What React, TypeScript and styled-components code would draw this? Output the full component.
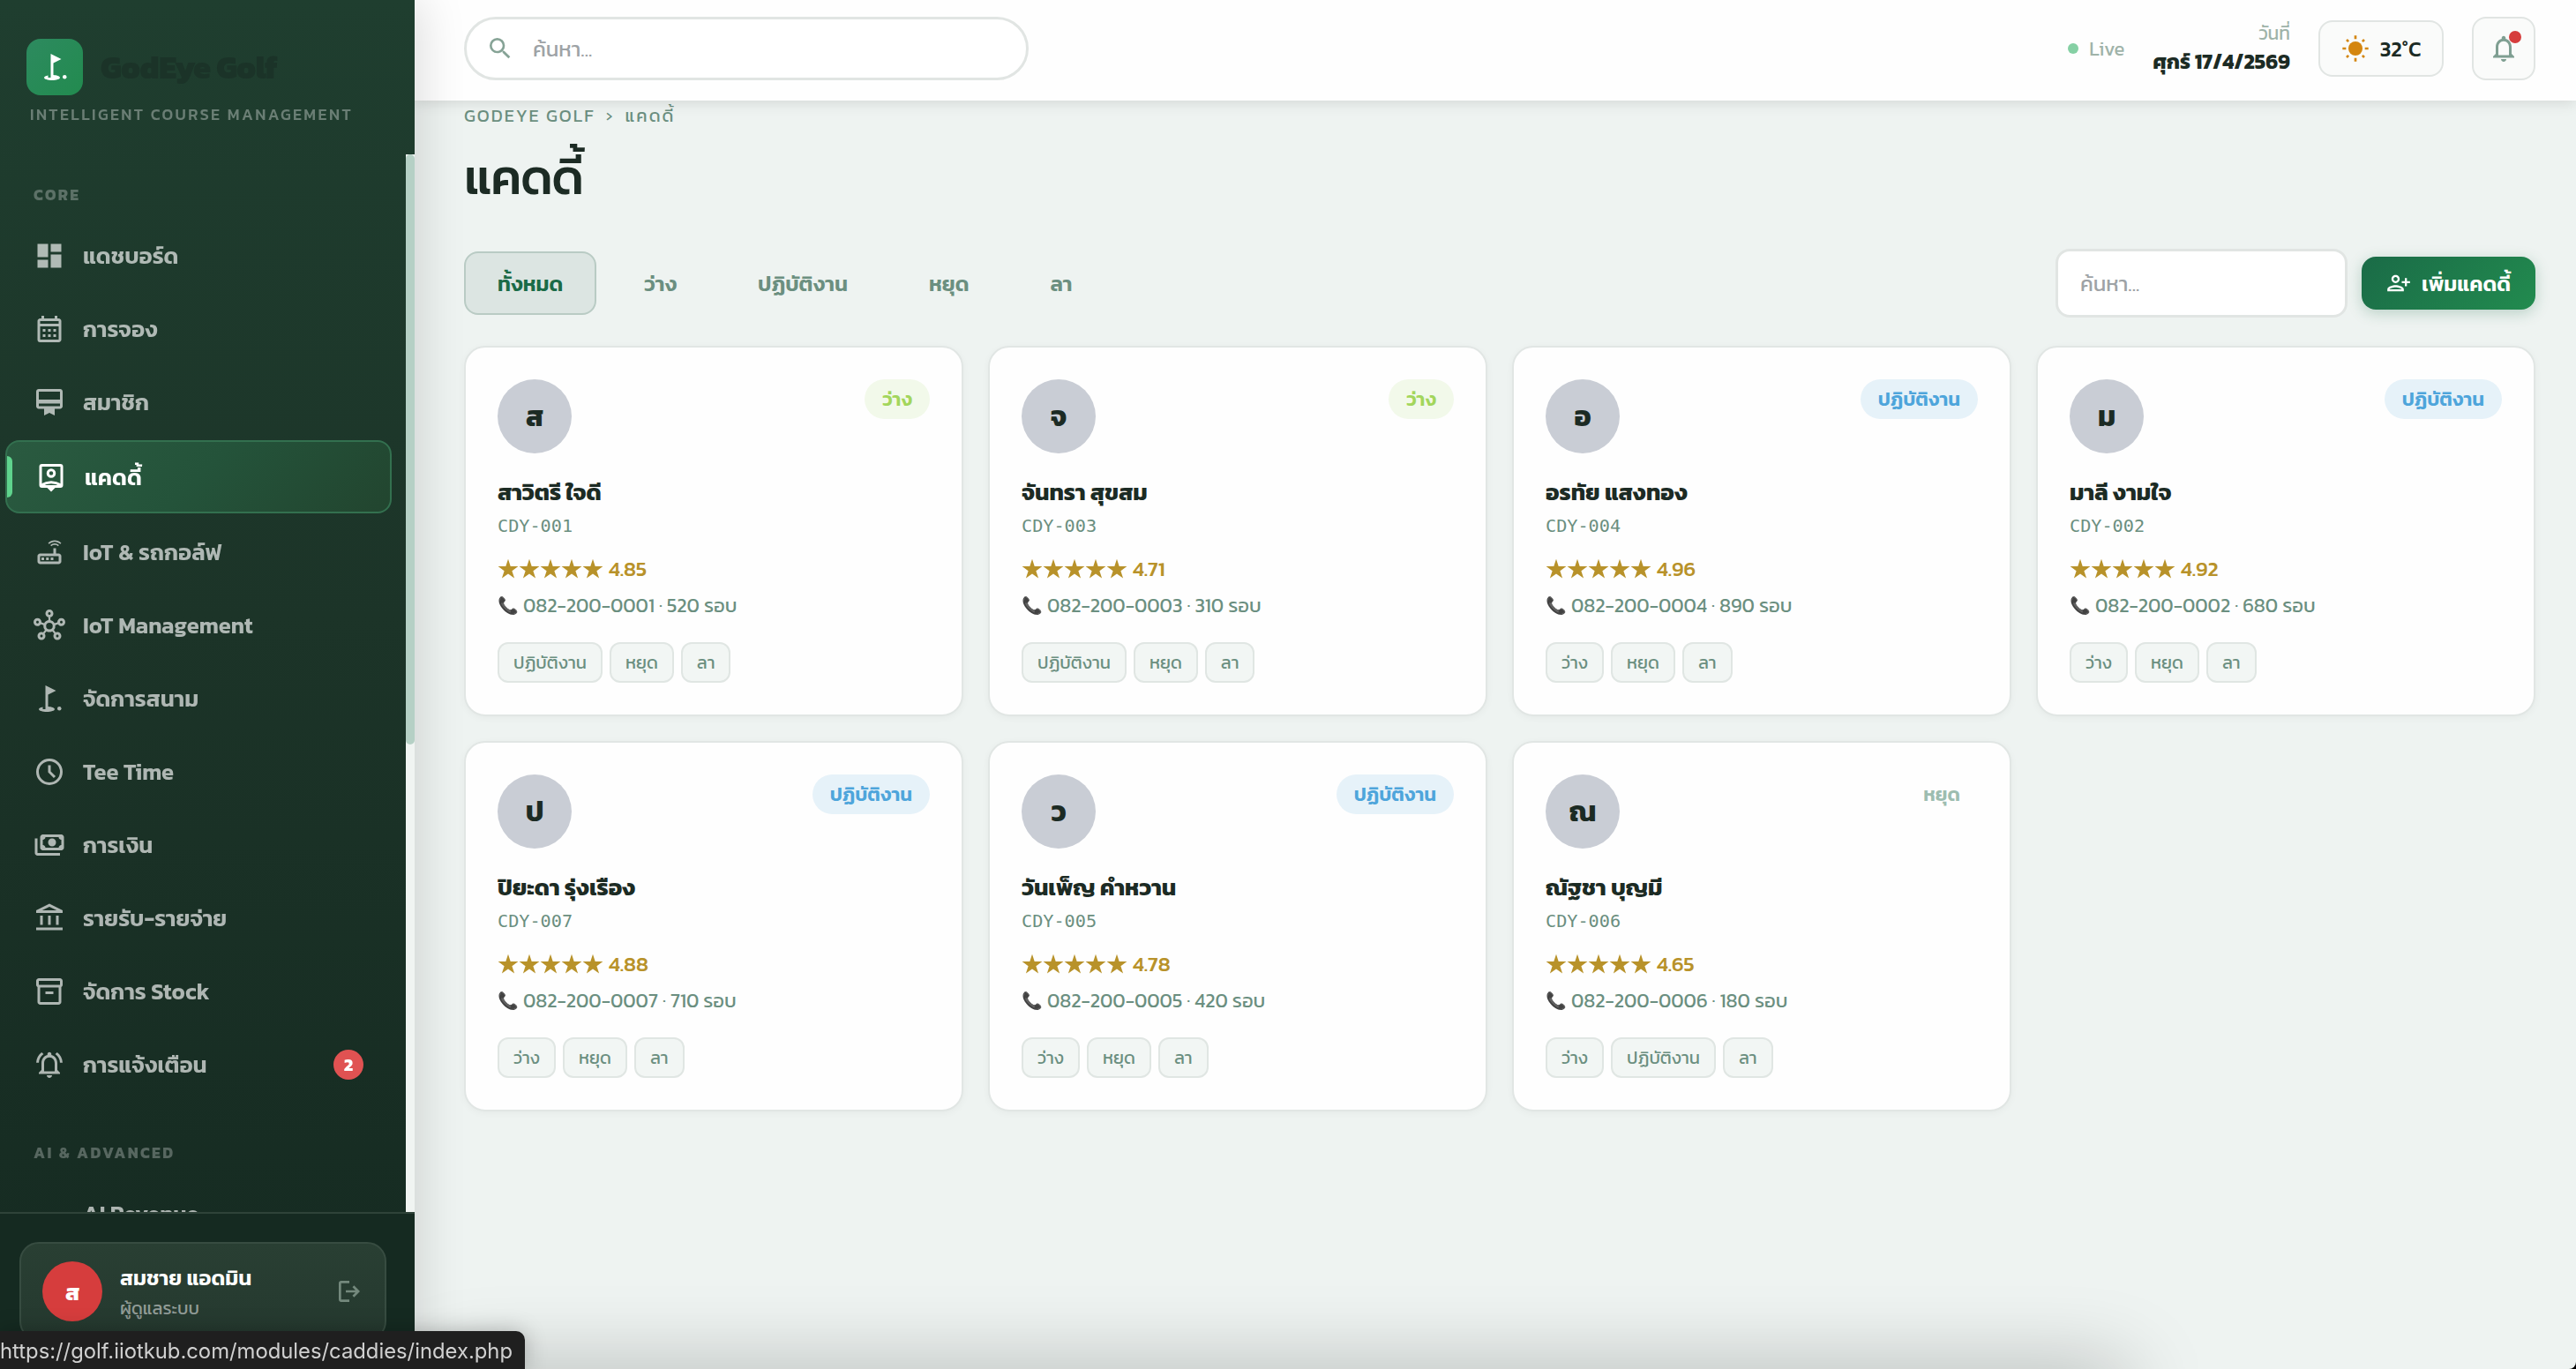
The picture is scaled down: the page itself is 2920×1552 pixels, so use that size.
import React from 'react';
import styled, { createGlobalStyle, css } from 'styled-components';
import {
  MdDashboard,
  MdOutlineCalendarMonth,
  MdCardMembership,
  MdOutlineRouter,
  MdOutlineHub,
  MdGolfCourse,
  MdOutlineInventory2,
  MdOutlineNotificationsActive,
  MdNotificationsNone,
  MdPersonAddAlt,
  MdSearch,
} from 'react-icons/md';

const GlobalStyle = createGlobalStyle`
  * {
    box-sizing: border-box;
  }

  html {
    background: #000;
  }

  body {
    margin: 0;
    overflow: hidden;
    font-family: Kanit, 'Noto Sans Thai', 'Noto Sans', sans-serif;
    color: #1c2b24;
  }

  button, input {
    font-family: inherit;
  }
`;

// Layout

const Layout = styled.div`
  display: flex;
  width: 2920px;
  height: 1552px;
  background: #eef3f1;
  border-bottom-right-radius: 8px;
  overflow: hidden;
`;

const Sidebar = styled.aside`
  position: relative;
  z-index: 3;
  width: 470px;
  flex-shrink: 0;
  display: flex;
  flex-direction: column;
  background: linear-gradient(180deg, #1f3e2f 0%, #1c3428 45%, #152a21 100%);
  box-shadow: 8px 0 48px rgba(0, 0, 0, 0.13);
`;

const Content = styled.div`
  flex: 1;
  min-width: 0;
  display: flex;
  flex-direction: column;
`;

// Sidebar

const Brand = styled.div`
  height: 175px;
  flex-shrink: 0;
  padding: 44px 30px 0;
`;

const BrandRow = styled.div`
  display: flex;
  align-items: center;
  gap: 20px;
`;

const BrandLogo = styled.div`
  width: 64px;
  height: 64px;
  display: grid;
  place-items: center;
  border-radius: 16px;
  color: #fff;
  background: linear-gradient(135deg, #2d8a5f, #228b4f);
`;

const BrandName = styled.div`
  font-size: 36px;
  line-height: 64px;
  font-weight: 800;
  letter-spacing: -0.7px;
  color: #1b3328;
`;

const BrandTagline = styled.div`
  margin: 9px 0 0 4px;
  font-size: 18px;
  line-height: 26px;
  font-weight: 500;
  letter-spacing: 2.4px;
  text-transform: uppercase;
  white-space: nowrap;
  color: rgba(255, 255, 255, 0.34);
`;

const NavArea = styled.div`
  flex: 1;
  min-height: 0;
  display: flex;
  overflow: hidden;
`;

const Nav = styled.nav`
  flex: 1;
  padding: 0 16px 0 6px;
`;

const ScrollTrack = styled.div`
  width: 10px;
  background: #f0f4f2;
`;

const ScrollThumb = styled.div`
  height: 669px;
  border-radius: 5px;
  background: #b5d0c5;
`;

const NavSection = styled.div<{ $first?: boolean }>`
  margin: ${(p) => (p.$first ? '35px' : '50px')} 0 18px 32px;
  font-size: 17.6px;
  line-height: 22px;
  font-weight: 700;
  letter-spacing: 2.4px;
  text-transform: uppercase;
  color: rgba(255, 255, 255, 0.28);
`;

const NavItem = styled.a<{ $active?: boolean }>`
  position: relative;
  display: flex;
  align-items: center;
  gap: 20px;
  height: 79px;
  margin-bottom: 4px;
  padding: 0 32px;
  border-radius: 16px;
  font-size: 25.6px;
  font-weight: 600;
  white-space: nowrap;
  color: rgba(255, 255, 255, 0.65);

  svg {
    flex-shrink: 0;
  }

  ${(p) =>
    p.$active &&
    css`
      height: 83px;
      border: 2px solid #33704f;
      color: #fff;
      background: linear-gradient(135deg, #2a5a40, #24533a 50%, #22452f);

      &::before {
        content: '';
        position: absolute;
        left: 0;
        top: 16px;
        width: 6px;
        height: 47px;
        border-radius: 0 6px 6px 0;
        background: #5fd38d;
      }
    `}
`;

const IconSlot = styled.span`
  width: 36px;
`;

const NavBadge = styled.span`
  width: 34px;
  height: 34px;
  margin-left: auto;
  display: grid;
  place-items: center;
  border-radius: 50%;
  font-size: 20px;
  font-weight: 700;
  color: #fff;
  background: #e05252;
`;

const SidebarFooter = styled.div`
  height: 178px;
  flex-shrink: 0;
  padding: 32px 32px 0 22px;
  border-top: 2px solid #2f4339;
  background: #152a21;
`;

const UserCard = styled.div`
  height: 112px;
  padding: 0 24px 0 24px;
  display: flex;
  align-items: center;
  border: 2px solid #374c41;
  border-radius: 22px;
  background: linear-gradient(180deg, #293f33, #25392f);
`;

const UserAvatar = styled.div`
  width: 68px;
  height: 68px;
  display: grid;
  place-items: center;
  border-radius: 50%;
  font-size: 26px;
  font-weight: 700;
  color: #fff;
  background: #d63d3d;
`;

const UserInfo = styled.div`
  margin-left: 20px;
  padding-top: 4px;
  flex: 1;
  line-height: 34px;
`;

const UserName = styled.div`
  font-size: 24px;
  font-weight: 600;
  color: #fff;
`;

const UserRole = styled.div`
  font-size: 20px;
  color: rgba(255, 255, 255, 0.5);
`;

const LogoutButton = styled.span`
  display: flex;
  color: #74897d;
`;

// Top bar

const Topbar = styled.header`
  position: relative;
  z-index: 2;
  height: 114px;
  flex-shrink: 0;
  padding: 0 46px 4px 56px;
  display: flex;
  align-items: center;
  background: #fefefe;
  box-shadow: 0 2px 16px rgba(0, 0, 0, 0.12);
`;

const SearchBox = styled.div`
  width: 640px;
  height: 72px;
  padding: 0 22px;
  display: flex;
  align-items: center;
  gap: 21px;
  border: 3px solid #e1e5e3;
  border-radius: 36px;
  color: #86a396;
  background: #fff;
`;

const SearchInput = styled.input`
  flex: 1;
  padding: 0;
  border: 0;
  outline: 0;
  font-size: 24px;
  background: transparent;

  &::placeholder {
    color: #9ea3a6;
  }
`;

const LiveStatus = styled.div`
  margin-left: auto;
  display: flex;
  align-items: center;
  gap: 12px;
  font-size: 22px;
  color: #9fb3a9;
`;

const LiveDot = styled.span`
  width: 12px;
  height: 12px;
  border-radius: 50%;
  background: #85d0a4;
`;

const DateBlock = styled.div`
  margin-left: 32px;
  text-align: right;
`;

const DateLabel = styled.div`
  font-size: 21px;
  line-height: 30px;
  color: #9fb3a9;
`;

const DateValue = styled.div`
  font-size: 23.6px;
  line-height: 34px;
  font-weight: 700;
`;

const Weather = styled.div`
  width: 142px;
  height: 64px;
  margin-left: 32px;
  display: flex;
  align-items: center;
  justify-content: center;
  gap: 12px;
  border: 2px solid #e1e5e3;
  border-radius: 16px;
  font-size: 24px;
  font-weight: 500;
  background: #fafbfa;

  svg {
    color: #d4860f;
  }
`;

const BellButton = styled.div`
  position: relative;
  width: 72px;
  height: 72px;
  margin-left: 32px;
  display: grid;
  place-items: center;
  border: 2px solid #e1e5e3;
  border-radius: 16px;
  color: #7f9f92;
  background: #fafbfa;
`;

const BellDot = styled.span`
  position: absolute;
  top: 14px;
  right: 14px;
  width: 14px;
  height: 14px;
  border-radius: 50%;
  background: #d63d3d;
`;

// Page

const Main = styled.main`
  padding: 0 46px 0 56px;
`;

const Breadcrumb = styled.div`
  display: flex;
  gap: 12px;
  height: 36px;
  font-size: 20px;
  line-height: 34px;
  letter-spacing: 2px;
  color: #6b8f80;
`;

const Title = styled.h1`
  margin: 8px 0 0;
  font-size: 56px;
  line-height: 84px;
  font-weight: 500;
  letter-spacing: -1.2px;
`;

const Toolbar = styled.div`
  height: 78px;
  margin-top: 40px;
  display: flex;
  align-items: center;
`;

const Tabs = styled.div`
  display: flex;
  gap: 16px;
`;

const Tab = styled.button<{ $active?: boolean }>`
  height: 72px;
  padding: 0 36px;
  border: 2px solid ${(p) => (p.$active ? '#b9cbc4' : 'transparent')};
  border-radius: 16px;
  font-size: 24px;
  font-weight: 600;
  color: ${(p) => (p.$active ? '#1a6b47' : '#6b8f80')};
  background: ${(p) => (p.$active ? '#dce5e2' : 'transparent')};
`;

const FilterInput = styled.input`
  width: 331px;
  height: 78px;
  margin-left: auto;
  padding: 0 25px;
  border: 3px solid #e1e5e3;
  border-radius: 16px;
  font-size: 24px;
  background: #fff;

  &::placeholder {
    color: #9ea3a6;
  }
`;

const AddButton = styled.button`
  width: 197px;
  height: 60px;
  margin-left: 16px;
  padding: 0;
  display: flex;
  align-items: center;
  justify-content: center;
  gap: 12px;
  border: 0;
  border-radius: 16px;
  font-size: 24px;
  font-weight: 600;
  color: #fff;
  background: linear-gradient(135deg, #1a6b47, #228b4f);
  box-shadow: 0 4px 16px rgba(26, 107, 71, 0.25);
`;

const CardGrid = styled.div`
  margin-top: 32px;
  display: grid;
  grid-template-columns: repeat(4, 1fr);
  gap: 28px;
`;

const Card = styled.article`
  height: 420px;
  padding: 36px;
  border: 2px solid #e1e6e4;
  border-radius: 24px;
  background: #fefefe;
  box-shadow: 0 2px 8px rgba(0, 0, 0, 0.04);
`;

const CardTop = styled.div`
  display: flex;
  justify-content: space-between;
  align-items: flex-start;
`;

const Avatar = styled.div`
  width: 84px;
  height: 84px;
  display: grid;
  place-items: center;
  border-radius: 50%;
  font-size: 32px;
  font-weight: 700;
  background: #c9cdd5;
`;

type Status = 'ว่าง' | 'ปฏิบัติงาน' | 'หยุด' | 'ลา';

const statusColors: Record<Status, { text: string; background: string }> = {
  'ว่าง': { text: '#a3d65c', background: '#f2f9ea' },
  'ปฏิบัติงาน': { text: '#4ea5db', background: '#e6f2f9' },
  'หยุด': { text: '#9dbdb0', background: 'transparent' },
  'ลา': { text: '#9dbdb0', background: 'transparent' },
};

const StatusBadge = styled.span<{ $status: Status }>`
  height: 45px;
  padding: 0 20px;
  border-radius: 23px;
  font-size: 22px;
  line-height: 45px;
  font-weight: 600;
  color: ${(p) => statusColors[p.$status].text};
  background: ${(p) => statusColors[p.$status].background};
`;

const CaddyName = styled.div`
  margin-top: 26px;
  font-size: 26px;
  line-height: 36px;
  font-weight: 700;
`;

const CaddyCode = styled.div`
  margin-top: 6px;
  font-family: 'DejaVu Sans Mono', monospace;
  font-size: 20.2px;
  line-height: 28px;
  color: #6b8f80;
`;

const Rating = styled.div`
  margin-top: 18px;
  display: flex;
  align-items: center;
  gap: 6px;
  font-size: 23.4px;
  line-height: 34px;
  font-weight: 500;
  color: #b8922a;
`;

const Stars = styled.span`
  display: flex;

  svg {
    width: 24px;
    height: 24px;
    fill: currentColor;
  }
`;

const Contact = styled.div`
  margin-top: 8px;
  display: flex;
  align-items: center;
  gap: 5px;
  font-size: 22px;
  line-height: 34px;
  color: #6b8f80;
`;

const PhoneEmoji = styled.span`
  font-size: 19px;
`;

const Actions = styled.div`
  margin-top: 24px;
  display: flex;
  gap: 8px;
`;

const ActionButton = styled.button`
  height: 46px;
  padding: 0 16px;
  border: 2px solid #e0e6e3;
  border-radius: 12px;
  font-size: 20px;
  color: #6b8f80;
  background: #f2f6f4;
`;

// Browser chrome over the page

const LinkPreview = styled.div`
  position: fixed;
  z-index: 5;
  left: 0;
  bottom: 0;
  height: 43px;
  padding-right: 14px;
  border-top-right-radius: 10px;
  font-family: Inter, sans-serif;
  font-size: 23.8px;
  line-height: 45px;
  white-space: nowrap;
  color: #d0d0d0;
  background: #1f1f1f;
  box-shadow: 0 0 24px rgba(0, 0, 0, 0.25);
`;

const DockShadow = styled.div`
  position: fixed;
  z-index: 1;
  left: 500px;
  bottom: -60px;
  width: 1910px;
  height: 60px;
  box-shadow: 0 0 90px rgba(0, 0, 0, 0.28);
`;

// Icons that the md set draws differently

interface GlyphProps {
  size?: number;
}

const glyph = (d: string) => ({ size = 36 }: GlyphProps) => (
  <svg width={size} height={size} viewBox="0 0 24 24" fill="currentColor">
    <path d={d} />
  </svg>
);

const ClockIcon = glyph(
  'm15.3 16.7 1.4-1.4-3.7-3.7V7h-2v5.4zM12 22a10 10 0 1 1 0-20 10 10 0 0 1 0 20m0-2a8 8 0 1 0 0-16 8 8 0 0 0 0 16'
);
const PaymentsIcon = glyph(
  'M14 13q-1.25 0-2.125-.875T11 10t.875-2.125T14 7t2.125.875T17 10t-.875 2.125T14 13m-7 3q-.825 0-1.412-.587T5 14V6q0-.825.588-1.412T7 4h14q.825 0 1.413.588T23 6v8q0 .825-.587 1.413T21 16zm2-2h10q0-.825.588-1.412T21 12V8q-.825 0-1.412-.587T19 6H9q0 .825-.587 1.413T7 8v4q.825 0 1.413.588T9 14m11 6H3q-.825 0-1.412-.587T1 18V7h2v11h17z'
);
const BankIcon = glyph(
  'M5 17v-7h2v7zm6 0v-7h2v7zm-9 4v-2h20v2zm15-4v-7h2v7zM2 8V6l10-5 10 5v2zm4.475-2h11.05L12 3.25z'
);
const LogoutIcon = glyph(
  'M5 21q-.825 0-1.412-.587T3 19V5q0-.825.588-1.412T5 3h7v2H5v14h7v2zm11-4-1.375-1.45 2.55-2.55H9v-2h8.175l-2.55-2.55L16 7l5 5z'
);
const StarIcon = glyph('M12 .8l2.7 8.3h8.7l-7 5.1 2.7 8.3-7.1-5.1-7.1 5.1 2.7-8.3-7-5.1h8.7z');

const PersonPinIcon = () => (
  <svg width="36" height="36" viewBox="0 0 24 24" fill="none" stroke="currentColor" strokeWidth="2">
    <path d="M5 3h14a1 1 0 0 1 1 1v14a1 1 0 0 1-1 1H5a1 1 0 0 1-1-1V4a1 1 0 0 1 1-1z" />
    <path d="M9 20h6l-3 3z" fill="currentColor" stroke="none" />
    <circle cx="12" cy="9" r="2.500" />
    <path d="M4.500 18.100Q12 13.500 19.500 18.100" />
  </svg>
);

const SunIcon = () => (
  <svg width="32" height="32" viewBox="0 0 24 24" fill="none" stroke="currentColor" strokeWidth="2">
    <circle cx="12" cy="12" r="6" fill="currentColor" stroke="none" />
    <path d="M12 1v3M12 20v3M1 12h3M20 12h3M4.500 4.500l1.600 1.600M17.900 17.900l1.600 1.600M4.500 19.500l1.600-1.600M17.900 6.100l1.600-1.600" />
  </svg>
);

interface NavEntry {
  label: string;
  icon: React.ReactNode;
  active?: boolean;
  badge?: number;
}

const coreNav: NavEntry[] = [
  { label: 'แดชบอร์ด', icon: <MdDashboard size={36} /> },
  { label: 'การจอง', icon: <MdOutlineCalendarMonth size={36} /> },
  { label: 'สมาชิก', icon: <MdCardMembership size={36} /> },
  { label: 'แคดดี้', icon: <PersonPinIcon />, active: true },
  { label: 'IoT & รถกอล์ฟ', icon: <MdOutlineRouter size={36} /> },
  { label: 'IoT Management', icon: <MdOutlineHub size={36} /> },
  { label: 'จัดการสนาม', icon: <MdGolfCourse size={36} /> },
  { label: 'Tee Time', icon: <ClockIcon /> },
  { label: 'การเงิน', icon: <PaymentsIcon /> },
  { label: 'รายรับ-รายจ่าย', icon: <BankIcon /> },
  { label: 'จัดการ Stock', icon: <MdOutlineInventory2 size={36} /> },
  { label: 'การแจ้งเตือน', icon: <MdOutlineNotificationsActive size={36} />, badge: 2 },
];

interface Caddy {
  name: string;
  initial: string;
  code: string;
  rating: string;
  phone: string;
  rounds: number;
  status: Status;
}

const caddies: Caddy[] = [
  { name: 'สาวิตรี ใจดี', initial: 'ส', code: 'CDY-001', rating: '4.85', phone: '082-200-0001', rounds: 520, status: 'ว่าง' },
  { name: 'จันทรา สุขสม', initial: 'จ', code: 'CDY-003', rating: '4.71', phone: '082-200-0003', rounds: 310, status: 'ว่าง' },
  { name: 'อรทัย แสงทอง', initial: 'อ', code: 'CDY-004', rating: '4.96', phone: '082-200-0004', rounds: 890, status: 'ปฏิบัติงาน' },
  { name: 'มาลี งามใจ', initial: 'ม', code: 'CDY-002', rating: '4.92', phone: '082-200-0002', rounds: 680, status: 'ปฏิบัติงาน' },
  { name: 'ปิยะดา รุ่งเรือง', initial: 'ป', code: 'CDY-007', rating: '4.88', phone: '082-200-0007', rounds: 710, status: 'ปฏิบัติงาน' },
  { name: 'วันเพ็ญ คำหวาน', initial: 'ว', code: 'CDY-005', rating: '4.78', phone: '082-200-0005', rounds: 420, status: 'ปฏิบัติงาน' },
  { name: 'ณัฐชา บุญมี', initial: 'ณ', code: 'CDY-006', rating: '4.65', phone: '082-200-0006', rounds: 180, status: 'หยุด' },
];

const statuses: Status[] = ['ว่าง', 'ปฏิบัติงาน', 'หยุด', 'ลา'];

const CaddyCard: React.FC<{ caddy: Caddy }> = ({ caddy }) => (
  <Card>
    <CardTop>
      <Avatar>{caddy.initial}</Avatar>
      <StatusBadge $status={caddy.status}>{caddy.status}</StatusBadge>
    </CardTop>
    <CaddyName>{caddy.name}</CaddyName>
    <CaddyCode>{caddy.code}</CaddyCode>
    <Rating>
      <Stars>
        {[1, 2, 3, 4, 5].map((n) => (
          <StarIcon key={n} />
        ))}
      </Stars>
      {caddy.rating}
    </Rating>
    <Contact>
      <PhoneEmoji>📞</PhoneEmoji>
      {caddy.phone} · {caddy.rounds} รอบ
    </Contact>
    <Actions>
      {statuses
        .filter((status) => status !== caddy.status)
        .map((status) => (
          <ActionButton key={status}>{status}</ActionButton>
        ))}
    </Actions>
  </Card>
);

const App: React.FC = () => {
  return (
    <>
      <GlobalStyle />
      <Layout>
        <Sidebar>
          <Brand>
            <BrandRow>
              <BrandLogo>
                <MdGolfCourse size={36} />
              </BrandLogo>
              <BrandName>GodEye Golf</BrandName>
            </BrandRow>
            <BrandTagline>Intelligent Course Management</BrandTagline>
          </Brand>
          <NavArea>
            <Nav>
              <NavSection $first>Core</NavSection>
              {coreNav.map((item) => (
                <NavItem key={item.label} $active={item.active}>
                  {item.icon}
                  {item.label}
                  {item.badge && <NavBadge>{item.badge}</NavBadge>}
                </NavItem>
              ))}
              <NavSection>AI &amp; Advanced</NavSection>
              <NavItem>
                <IconSlot />
                AI Revenue
              </NavItem>
            </Nav>
            <ScrollTrack>
              <ScrollThumb />
            </ScrollTrack>
          </NavArea>
          <SidebarFooter>
            <UserCard>
              <UserAvatar>ส</UserAvatar>
              <UserInfo>
                <UserName>สมชาย แอดมิน</UserName>
                <UserRole>ผู้ดูแลระบบ</UserRole>
              </UserInfo>
              <LogoutButton>
                <LogoutIcon size={32} />
              </LogoutButton>
            </UserCard>
          </SidebarFooter>
        </Sidebar>

        <Content>
          <Topbar>
            <SearchBox>
              <MdSearch size={32} />
              <SearchInput placeholder="ค้นหา..." />
            </SearchBox>
            <LiveStatus>
              <LiveDot />
              Live
            </LiveStatus>
            <DateBlock>
              <DateLabel>วันที่</DateLabel>
              <DateValue>ศุกร์ 17/4/2569</DateValue>
            </DateBlock>
            <Weather>
              <SunIcon />
              32°C
            </Weather>
            <BellButton>
              <MdNotificationsNone size={36} />
              <BellDot />
            </BellButton>
          </Topbar>

          <Main>
            <Breadcrumb>
              <span>GODEYE GOLF</span>
              <span>›</span>
              <span>แคดดี้</span>
            </Breadcrumb>
            <Title>แคดดี้</Title>
            <Toolbar>
              <Tabs>
                <Tab $active>ทั้งหมด</Tab>
                {statuses.map((status) => (
                  <Tab key={status}>{status}</Tab>
                ))}
              </Tabs>
              <FilterInput placeholder="ค้นหา..." />
              <AddButton>
                <MdPersonAddAlt size={28} />
                เพิ่มแคดดี้
              </AddButton>
            </Toolbar>
            <CardGrid>
              {caddies.map((caddy) => (
                <CaddyCard key={caddy.code} caddy={caddy} />
              ))}
            </CardGrid>
          </Main>
        </Content>
      </Layout>
      <DockShadow />
      <LinkPreview>https://golf.iiotkub.com/modules/caddies/index.php</LinkPreview>
    </>
  );
};

export default App;
